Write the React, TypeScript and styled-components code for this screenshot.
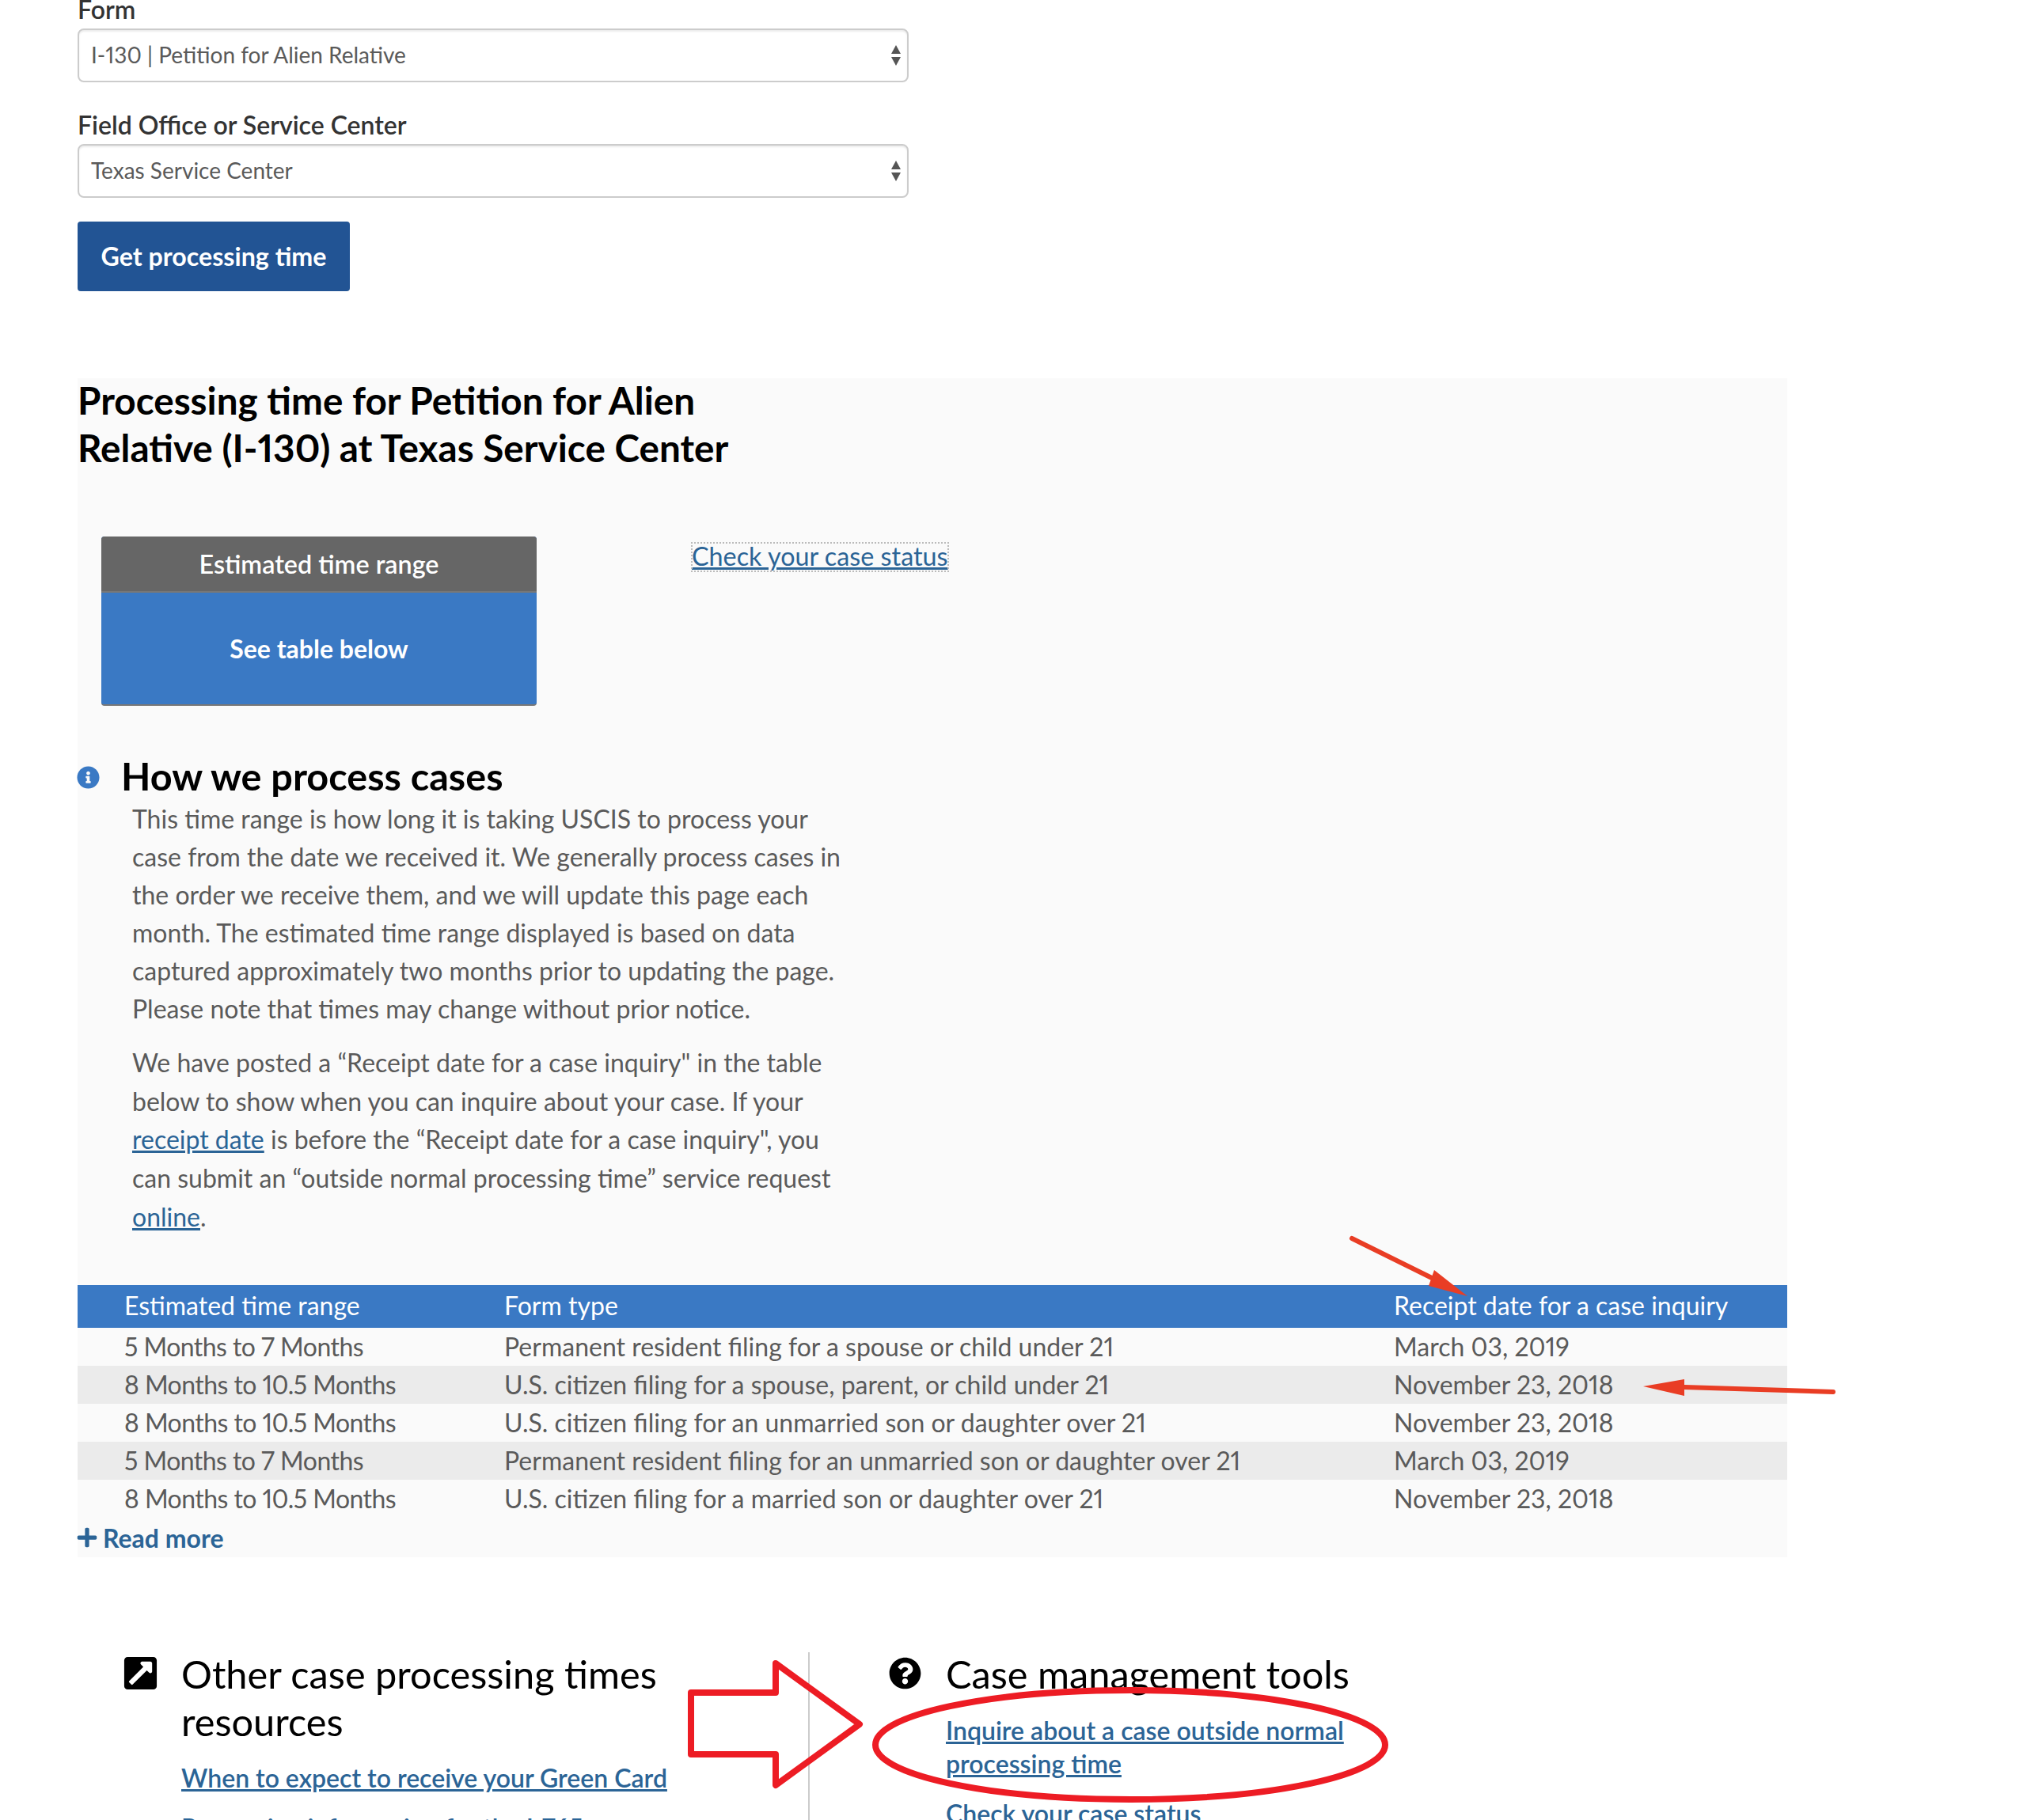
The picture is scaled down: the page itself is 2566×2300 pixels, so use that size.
import React from 'react';
import styled, { createGlobalStyle } from 'styled-components';
import { FaInfoCircle, FaQuestionCircle, FaExternalLinkSquareAlt, FaPlus } from 'react-icons/fa';

const GlobalStyle = createGlobalStyle`
  html, body {
    margin: 0;
    padding: 0;
    background: #fff;
  }
  body {
    font-family: Lato, "Open Sans", sans-serif;
    font-variant-numeric: proportional-nums;
    color: #5a5a5a;
  }
`;

const Page = styled.div`
  position: relative;
  width: 2566px;
  height: 2300px;
  overflow: hidden;
`;

const Shifted = styled.div`
  margin-top: -12px;
`;

const FormBlock = styled.form`
  margin-left: 98px;
  width: 1050px;
`;

const FieldLabel = styled.label`
  display: block;
  height: 48px;
  line-height: 48px;
  font-size: 32px;
  font-weight: 600;
  color: #333;
`;

const SelectWrap = styled.div`
  position: relative;
  margin-bottom: 30px;

  &::before, &::after {
    content: "";
    position: absolute;
    right: 10px;
    border-left: 6px solid transparent;
    border-right: 6px solid transparent;
  }
  &::before {
    top: 21px;
    border-bottom: 11px solid #555;
  }
  &::after {
    top: 36px;
    border-top: 11px solid #555;
  }
`;

const Select = styled.select`
  display: block;
  width: 100%;
  height: 68px;
  appearance: none;
  background: #fff;
  border: 2px solid #ccc;
  border-radius: 8px;
  box-shadow: inset 0 2px 2px rgba(0, 0, 0, 0.08);
  padding: 0 16px 2px 15px;
  font-family: inherit;
  font-variant-numeric: proportional-nums;
  font-size: 28px;
  color: #5a5a5a;
`;

const SubmitButton = styled.button`
  display: block;
  width: 344px;
  height: 88px;
  margin-top: 1px;
  padding: 0 0 2px;
  border: 0;
  border-radius: 4px;
  background: #225494;
  color: #fff;
  font-family: inherit;
  font-size: 32.2px;
  font-weight: 700;
`;

const Panel = styled.section`
  display: flow-root;
  margin: 110px 0 0 98px;
  width: 2160px;
  height: 1490px;
  background: #fafafa;
`;

const ResultTitle = styled.h2`
  margin: -2px 0 0;
  font-size: 47.7px;
  line-height: 60px;
  font-weight: 700;
  color: #000;
`;

const SummaryRow = styled.div`
  display: flex;
  align-items: flex-start;
  margin: 82px 0 0 30px;
`;

const RangeBox = styled.div`
  box-sizing: border-box;
  width: 550px;
  height: 214px;
  border-radius: 4px;
  overflow: hidden;
  border-bottom: 2px solid #777;
  background: #3a79c4;
  color: #fff;
  text-align: center;
`;

const RangeHead = styled.div`
  box-sizing: border-box;
  height: 71px;
  line-height: 70px;
  background: #666;
  border-bottom: 2px solid #777;
  font-size: 32.3px;
  font-weight: 600;
`;

const RangeBody = styled.div`
  line-height: 141px;
  font-size: 32px;
  font-weight: 700;
`;

const StatusLink = styled.a`
  margin: 8px 0 0 196px;
  height: 36px;
  line-height: 34px;
  outline: 2px dotted #bbb;
  outline-offset: -1px;
  color: #2b6496;
  font-size: 32.3px;
  text-decoration: underline;
`;

const HowRow = styled.div`
  display: flex;
  align-items: center;
  gap: 27px;
  margin-top: 58px;
  height: 60px;
  color: #3a79c4;
  font-size: 29px;

  svg {
    margin: 4px 0 0 -1px;
  }
`;

const HowTitle = styled.h3`
  margin: 0;
  font-size: 48.6px;
  line-height: 60px;
  font-weight: 700;
  color: #000;
`;

const Copy = styled.p<{ $lh: number }>`
  margin: 1px 0 20px 69px;
  font-size: 32px;
  line-height: ${(p) => p.$lh}px;
  color: #5a5a5a;

  a {
    color: #2b6496;
    text-decoration: underline;
  }
`;

const Table = styled.table`
  position: absolute;
  top: 1624px;
  left: 98px;
  width: 2160px;
  border-collapse: collapse;
  table-layout: fixed;
  font-size: 32px;
`;

const HeadCell = styled.th<{ $w: number }>`
  width: ${(p) => p.$w}px;
  height: 54px;
  padding: 0 0 4px 59px;
  box-sizing: border-box;
  background: #3a79c4;
  color: #fff;
  font-weight: 400;
  text-align: left;
`;

const Row = styled.tr<{ $shaded: boolean }>`
  background: ${(p) => (p.$shaded ? '#ebebeb' : 'transparent')};
`;

const Cell = styled.td`
  box-sizing: border-box;
  height: 48px;
  padding: 0 0 1px 59px;
  color: #5a5a5a;

  &:first-child {
    letter-spacing: -0.55px;
  }
`;

const ReadMore = styled.a`
  position: absolute;
  top: 1917px;
  left: 96px;
  display: flex;
  align-items: center;
  gap: 6px;
  height: 52px;
  color: #2b6496;
  font-size: 32px;
  font-weight: 700;
`;

const Resources = styled.div`
  position: absolute;
  top: 2088px;
  left: 0;
  display: flex;
  height: 240px;
`;

const ResourceCol = styled.div<{ $w: number; $pad: number; $divided?: boolean }>`
  display: flex;
  align-items: flex-start;
  gap: 31px;
  box-sizing: border-box;
  width: ${(p) => p.$w}px;
  padding-left: ${(p) => p.$pad}px;
  ${(p) => (p.$divided ? 'border-left: 2px solid #ccc;' : '')}
`;

const ResourceIcon = styled.div<{ $size: number }>`
  flex: none;
  display: flex;
  align-items: center;
  justify-content: center;
  width: 41px;
  height: 41px;
  margin-top: 6px;
  font-size: ${(p) => p.$size}px;
  color: #000;

  svg {
    flex: none;
  }
`;

const ResourceBody = styled.div`
  width: 620px;
`;

const ResourceTitle = styled.h4`
  margin: -3px 0 21px;
  font-size: 48.7px;
  line-height: 60px;
  font-weight: 400;
  color: #000;
`;

const ResourceLink = styled.a`
  display: block;
  margin-bottom: 21px;
  font-size: 32px;
  line-height: 42px;
  font-weight: 600;
  color: #2b6496;
  text-decoration: underline;
`;

const Annotations = styled.svg`
  position: absolute;
  top: 0;
  left: 0;
  pointer-events: none;
`;

const rows = [
  ['5 Months to 7 Months', 'Permanent resident filing for a spouse or child under 21', 'March 03, 2019'],
  ['8 Months to 10.5 Months', 'U.S. citizen filing for a spouse, parent, or child under 21', 'November 23, 2018'],
  ['8 Months to 10.5 Months', 'U.S. citizen filing for an unmarried son or daughter over 21', 'November 23, 2018'],
  ['5 Months to 7 Months', 'Permanent resident filing for an unmarried son or daughter over 21', 'March 03, 2019'],
  ['8 Months to 10.5 Months', 'U.S. citizen filing for a married son or daughter over 21', 'November 23, 2018'],
];

const App = () => {
  return (
    <Page>
      <GlobalStyle />
      <Shifted>
        <FormBlock>
          <FieldLabel>Form</FieldLabel>
          <SelectWrap>
            <Select defaultValue="I-130">
              <option value="I-130">I-130 | Petition for Alien Relative</option>
            </Select>
          </SelectWrap>
          <FieldLabel>Field Office or Service Center</FieldLabel>
          <SelectWrap>
            <Select defaultValue="TSC">
              <option value="TSC">Texas Service Center</option>
            </Select>
          </SelectWrap>
          <SubmitButton type="button">Get processing time</SubmitButton>
        </FormBlock>

        <Panel>
          <ResultTitle>
            Processing time for Petition for Alien
            <br />
            Relative (I-130) at Texas Service Center
          </ResultTitle>
          <SummaryRow>
            <RangeBox>
              <RangeHead>Estimated time range</RangeHead>
              <RangeBody>See table below</RangeBody>
            </RangeBox>
            <StatusLink>Check your case status</StatusLink>
          </SummaryRow>
          <HowRow>
            <FaInfoCircle />
            <HowTitle>How we process cases</HowTitle>
          </HowRow>
          <Copy $lh={48}>
            This time range is how long it is taking USCIS to process your
            <br />
            case from the date we received it. We generally process cases in
            <br />
            the order we receive them, and we will update this page each
            <br />
            month. The estimated time range displayed is based on data
            <br />
            captured approximately two months prior to updating the page.
            <br />
            Please note that times may change without prior notice.
          </Copy>
          <Copy $lh={48.7}>
            We have posted a “Receipt date for a case inquiry" in the table
            <br />
            below to show when you can inquire about your case. If your
            <br />
            <a>receipt date</a> is before the “Receipt date for a case inquiry", you
            <br />
            can submit an “outside normal processing time” service request
            <br />
            <a>online</a>.
          </Copy>
        </Panel>
      </Shifted>

      <Table>
        <thead>
          <tr>
            <HeadCell $w={480}>Estimated time range</HeadCell>
            <HeadCell $w={1124}>Form type</HeadCell>
            <HeadCell $w={556}>Receipt date for a case inquiry</HeadCell>
          </tr>
        </thead>
        <tbody>
          {rows.map((r, i) => (
            <Row key={i} $shaded={i % 2 === 1}>
              {r.map((c) => (
                <Cell key={c}>{c}</Cell>
              ))}
            </Row>
          ))}
        </tbody>
      </Table>
      <ReadMore>
        <FaPlus size={28} />
        Read more
      </ReadMore>

      <Resources>
        <ResourceCol $w={1021} $pad={157}>
          <ResourceIcon $size={47}>
            <FaExternalLinkSquareAlt />
          </ResourceIcon>
          <ResourceBody>
            <ResourceTitle>Other case processing times resources</ResourceTitle>
            <ResourceLink>When to expect to receive your Green Card</ResourceLink>
            <ResourceLink>Processing information for the I-765</ResourceLink>
          </ResourceBody>
        </ResourceCol>
        <ResourceCol $w={1000} $pad={100} $divided>
          <ResourceIcon $size={41}>
            <FaQuestionCircle />
          </ResourceIcon>
          <ResourceBody>
            <ResourceTitle>Case management tools</ResourceTitle>
            <ResourceLink>
              Inquire about a case outside normal
              <br />
              processing time
            </ResourceLink>
            <ResourceLink>Check your case status</ResourceLink>
          </ResourceBody>
        </ResourceCol>
      </Resources>

      <Annotations width="2566" height="2300" viewBox="0 0 2566 2300">
        <path
          d="M873 2139 H980 V2102 L1086 2179 L980 2256 V2217 H873 Z"
          fill="none"
          stroke="#ed1c24"
          strokeWidth="8"
          strokeLinejoin="round"
        />
        <ellipse cx="1428" cy="2205" rx="322" ry="69" fill="none" stroke="#ed1c24" strokeWidth="8" />
        <path d="M1708 1565 L1809 1615" stroke="#e93d24" strokeWidth="6" strokeLinecap="round" />
        <path d="M1812 1605 L1854 1638 L1805 1625 Z" fill="#e93d24" />
        <path d="M2128 1753 L2316 1759" stroke="#e93d24" strokeWidth="6" strokeLinecap="round" />
        <path d="M2128 1743 L2076 1752 L2128 1764 Z" fill="#e93d24" />
      </Annotations>
    </Page>
  );
};

export default App;
